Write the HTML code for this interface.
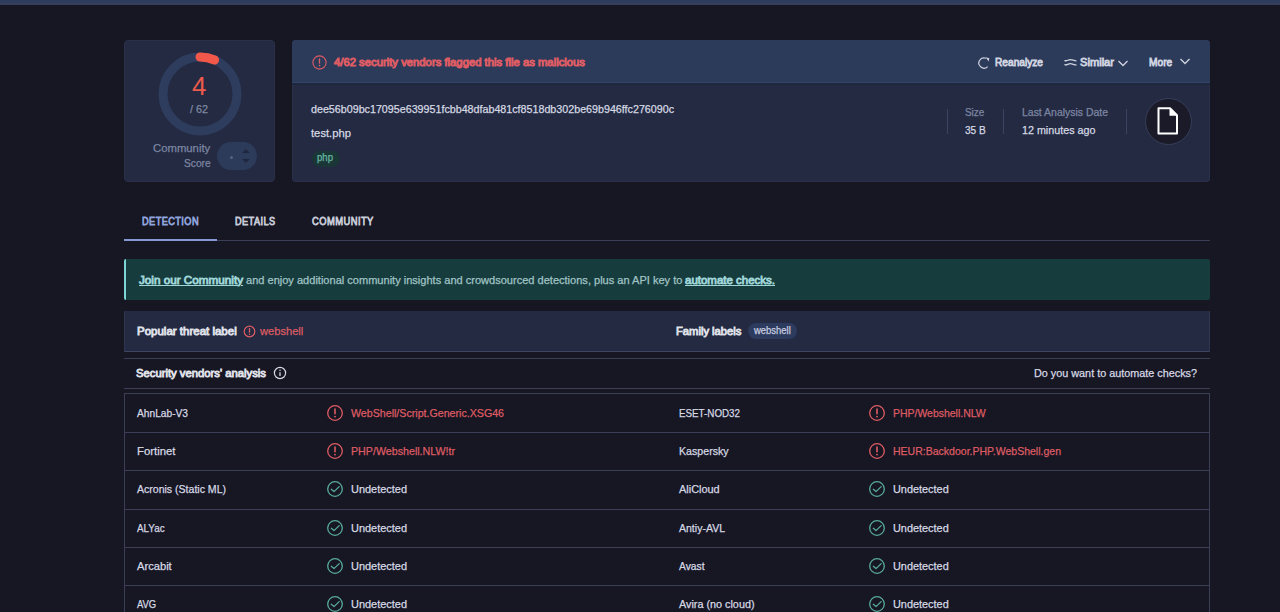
<!DOCTYPE html>
<html><head><meta charset="utf-8">
<style>
*{margin:0;padding:0;box-sizing:border-box}
html,body{width:1280px;height:612px;overflow:hidden;background:#171623;font-family:"Liberation Sans",sans-serif;color:#d6d9e3}
.a{position:absolute;white-space:nowrap}
.t{position:absolute;white-space:nowrap;transform-origin:0 0;line-height:1}
</style></head><body>
<div class="a" style="left:0;top:0;width:1280px;height:3px;background:#2e3d5e"></div>
<div class="a" style="left:0;top:3px;width:1280px;height:2px;background:#363e58"></div>
<div class="a" style="left:0;top:5px;width:1280px;height:1px;background:#131628"></div>
<div class="a" style="left:124px;top:40px;width:151px;height:142px;background:#232a42;border-radius:4px;border:1px solid #2a304a"></div>
<svg class="a" style="left:155px;top:49px" width="90" height="90" viewBox="0 0 90 90">
  <circle cx="45" cy="45" r="37" fill="none" stroke="#2e3d5e" stroke-width="9"/>
  <path d="M45 8 A37 37 0 0 1 59.6 11" fill="none" stroke="#f2584a" stroke-width="9" stroke-linecap="round"/>
</svg>
<div class="t" style="left:192.00px;top:72.79px;font-size:26px;color:#ee5a4b;transform:scaleX(0.9959);">4</div>
<div class="t" style="left:190.00px;top:103.99px;font-size:11px;color:#7f88a0;-webkit-text-stroke:0.25px #7f88a0;transform:scaleX(0.9811);">/ 62</div>
<div class="t" style="left:153.40px;top:143.49px;font-size:11px;color:#7d86a2;-webkit-text-stroke:0.25px #7d86a2;transform:scaleX(1.0284);">Community</div>
<div class="t" style="left:183.90px;top:157.59px;font-size:11px;color:#7d86a2;-webkit-text-stroke:0.25px #7d86a2;transform:scaleX(0.9292);">Score</div>
<div class="a" style="left:217px;top:142px;width:40px;height:28px;border-radius:14px;background:#2d3b5b"></div>
<div class="a" style="left:230px;top:155.5px;width:3px;height:3px;border-radius:2px;background:#56627e"></div>
<svg class="a" style="left:240px;top:146px" width="12" height="20" viewBox="0 0 12 20"><path d="M2 7 L6 3 L10 7Z M2 13 L6 17 L10 13Z" fill="#1f2740"/></svg>
<div class="a" style="left:292px;top:40px;width:918px;height:142px;background:#232a42;border-radius:4px;overflow:hidden;box-shadow:inset 0 0 0 1px #2a304a"><div class="a" style="left:0;top:0;width:918px;height:43px;background:#2d3b5b;border-bottom:1px solid #32436a"></div><div class="a" style="left:0;top:43px;width:918px;height:2px;background:#1f273e"></div></div>
<svg class="a" style="left:311px;top:54px" width="17" height="17" viewBox="0 0 17 17"><circle cx="8.5" cy="8.5" r="6.6" fill="none" stroke="#de5c64" stroke-width="1.1"/><path d="M8.5 4.9 V9.2" stroke="#de5c64" stroke-width="1.3" stroke-linecap="round"/><circle cx="8.5" cy="11.6" r="0.8" fill="#de5c64"/></svg>
<div class="t" style="left:334.00px;top:57.27px;font-size:11.5px;color:#de5c64;-webkit-text-stroke:1.03px #de5c64;transform:scaleX(0.9817);">4/62 security vendors flagged this file as malicious</div>
<div class="t" style="left:311.00px;top:104.29px;font-size:11px;color:#d6d9e3;-webkit-text-stroke:0.25px #d6d9e3;transform:scaleX(0.9734);">dee56b09bc17095e639951fcbb48dfab481cf8518db302be69b946ffc276090c</div>
<div class="t" style="left:311.00px;top:128.09px;font-size:11px;color:#d6d9e3;-webkit-text-stroke:0.25px #d6d9e3;transform:scaleX(1.0220);">test.php</div>
<div class="a" style="left:311.5px;top:150.5px;width:28px;height:16.5px;border-radius:8px;background:#1a3637"></div>
<div class="t" style="left:317.00px;top:153.03px;font-size:10px;color:#66b8a2;-webkit-text-stroke:0.25px #66b8a2;transform:scaleX(0.9591);">php</div>
<svg class="a" style="left:976.8px;top:55.5px" width="14" height="14" viewBox="0 0 14 14"><path d="M8.9 2.3 A5.1 5.1 0 1 0 10.6 10.6" fill="none" stroke="#d0d4e0" stroke-width="1.2"/><path d="M8.6 1.3 L12.4 2.2 L11.6 5.6 Z" fill="#d0d4e0"/></svg>
<div class="t" style="left:995.00px;top:57.44px;font-size:11px;color:#d0d4e0;-webkit-text-stroke:0.82px #d0d4e0;transform:scaleX(0.9235);">Reanalyze</div>
<svg class="a" style="left:1063px;top:57px" width="15" height="11" viewBox="0 0 15 11"><path d="M1.9 3.6 C3.5 4.4 5.2 2.6 7.1 2.6 C9.5 2.6 11 3.8 13 3.8 M1.9 7.7 C3.5 8.5 5.2 6.7 7.1 6.7 C9.5 6.7 11 7.9 13 7.9" fill="none" stroke="#d0d4e0" stroke-width="1.3" stroke-linecap="round"/></svg>
<div class="t" style="left:1079.60px;top:57.44px;font-size:11px;color:#d0d4e0;-webkit-text-stroke:0.82px #d0d4e0;transform:scaleX(1.0116);">Similar</div>
<svg class="a" style="left:1117px;top:59px" width="12" height="9" viewBox="0 0 12 9"><path d="M1.5 2 L6 6.5 L10.5 2" fill="none" stroke="#d0d4e0" stroke-width="1.3"/></svg>
<div class="t" style="left:1148.80px;top:57.44px;font-size:11px;color:#d0d4e0;-webkit-text-stroke:0.82px #d0d4e0;transform:scaleX(0.9258);">More</div>
<svg class="a" style="left:1179px;top:57px" width="12" height="9" viewBox="0 0 12 9"><path d="M1.5 2 L6 6.5 L10.5 2" fill="none" stroke="#d0d4e0" stroke-width="1.3"/></svg>
<div class="a" style="left:946.5px;top:109px;width:1px;height:25px;background:#3a4360"></div>
<div class="a" style="left:1003px;top:109px;width:1px;height:25px;background:#3a4360"></div>
<div class="a" style="left:1126px;top:109px;width:1px;height:25px;background:#3a4360"></div>
<div class="t" style="left:964.50px;top:107.11px;font-size:10.5px;color:#7d86a2;-webkit-text-stroke:0.25px #7d86a2;transform:scaleX(0.9449);">Size</div>
<div class="t" style="left:964.50px;top:124.69px;font-size:11px;color:#d6d9e3;-webkit-text-stroke:0.25px #d6d9e3;transform:scaleX(0.9192);">35 B</div>
<div class="t" style="left:1021.60px;top:107.11px;font-size:10.5px;color:#7d86a2;-webkit-text-stroke:0.25px #7d86a2;transform:scaleX(0.9957);">Last Analysis Date</div>
<div class="t" style="left:1021.60px;top:124.69px;font-size:11px;color:#d6d9e3;-webkit-text-stroke:0.25px #d6d9e3;transform:scaleX(0.9759);">12 minutes ago</div>
<div class="a" style="left:1144.5px;top:97.5px;width:47px;height:47px;border-radius:24px;background:#1a1a28;border:1px solid #363e5a"></div>
<svg class="a" style="left:1156px;top:106px" width="24" height="30" viewBox="0 0 24 30"><path d="M2.5 2.2 H14 L21 9.2 V27.6 H2.5 Z" fill="none" stroke="#ffffff" stroke-width="2" stroke-linejoin="round"/><path d="M13.5 2.2 L21 9.7 H13.5Z" fill="#ffffff"/></svg>
<div class="t" style="left:142.00px;top:215.61px;font-size:10.5px;color:#90a5de;-webkit-text-stroke:0.79px #90a5de;letter-spacing:0.5px;transform:scaleX(0.8747);">DETECTION</div>
<div class="t" style="left:235.30px;top:215.81px;font-size:10.5px;color:#c8ccd8;-webkit-text-stroke:0.79px #c8ccd8;letter-spacing:0.5px;transform:scaleX(0.8713);">DETAILS</div>
<div class="t" style="left:311.60px;top:215.81px;font-size:10.5px;color:#c8ccd8;-webkit-text-stroke:0.79px #c8ccd8;letter-spacing:0.5px;transform:scaleX(0.8925);">COMMUNITY</div>
<div class="a" style="left:124px;top:240px;width:1086px;height:1px;background:#3a3f57"></div>
<div class="a" style="left:124px;top:239px;width:93px;height:2px;background:#8299d6"></div>
<div class="a" style="left:124px;top:259px;width:1086px;height:41px;background:#173c3e;border-left:2.5px solid #7fd5d6;border-radius:2px"></div>
<div class="t" style="left:138.75px;top:274.69px;font-size:11px;color:#9fd6d8;-webkit-text-stroke:0.82px #9fd6d8;transform:scaleX(1.0633);text-decoration:underline;">Join our Community</div>
<div class="t" style="left:245.60px;top:274.69px;font-size:11px;color:#a0c4c5;-webkit-text-stroke:0.25px #a0c4c5;transform:scaleX(1.0038);">and enjoy additional community insights and crowdsourced detections, plus an API key to</div>
<div class="t" style="left:684.90px;top:274.69px;font-size:11px;color:#9fd6d8;-webkit-text-stroke:0.82px #9fd6d8;transform:scaleX(1.0440);text-decoration:underline;">automate checks.</div>
<div class="a" style="left:124px;top:310.5px;width:1086px;height:41.5px;background:#232a42;border:1px solid #2f3650;border-top-color:#232a42;border-bottom-color:#3c4562"></div>
<div class="t" style="left:137.00px;top:325.69px;font-size:11px;color:#e0e2ea;-webkit-text-stroke:0.82px #e0e2ea;transform:scaleX(1.0452);">Popular threat label</div>
<svg class="a" style="left:243px;top:324.5px" width="13" height="13" viewBox="0 0 13 13"><circle cx="6.5" cy="6.5" r="5.3" fill="none" stroke="#de5c64" stroke-width="1.2"/><path d="M6.5 3.6 V7.2" stroke="#de5c64" stroke-width="1.3" stroke-linecap="round"/><circle cx="6.5" cy="9.2" r="0.75" fill="#de5c64"/></svg>
<div class="t" style="left:260.40px;top:325.69px;font-size:11px;color:#de5c64;-webkit-text-stroke:0.25px #de5c64;transform:scaleX(1.0117);">webshell</div>
<div class="t" style="left:675.60px;top:325.69px;font-size:11px;color:#e0e2ea;-webkit-text-stroke:0.82px #e0e2ea;transform:scaleX(1.0190);">Family labels</div>
<div class="a" style="left:747.5px;top:322.5px;width:49.5px;height:16.5px;border-radius:8px;background:#2d3b5e"></div>
<div class="t" style="left:753.75px;top:325.84px;font-size:10px;color:#c8cde0;-webkit-text-stroke:0.25px #c8cde0;transform:scaleX(0.9458);">webshell</div>
<div class="a" style="left:124px;top:358px;width:1086px;height:1px;background:#3a3f57"></div>
<div class="t" style="left:136.00px;top:368.29px;font-size:11px;color:#e0e2ea;-webkit-text-stroke:0.82px #e0e2ea;transform:scaleX(1.0251);">Security vendors' analysis</div>
<svg class="a" style="left:273px;top:366px" width="14" height="14" viewBox="0 0 14 14"><circle cx="7" cy="7" r="5.6" fill="none" stroke="#d6d9e3" stroke-width="1.2"/><path d="M7 6.2 V10" stroke="#d6d9e3" stroke-width="1.3"/><circle cx="7" cy="4.3" r="0.75" fill="#d6d9e3"/></svg>
<div class="t" style="left:1034.30px;top:368.19px;font-size:11px;color:#d6d9e3;-webkit-text-stroke:0.25px #d6d9e3;transform:scaleX(0.9837);">Do you want to automate checks?</div>
<div class="a" style="left:124px;top:388px;width:1086px;height:1px;background:#3a3f57"></div>
<div class="a" style="left:124px;top:393px;width:1086px;height:230px;border:1px solid #3a3f57"></div>
<div class="t" style="left:136.80px;top:407.69px;font-size:11px;color:#d6d9e3;-webkit-text-stroke:0.25px #d6d9e3;transform:scaleX(0.9266);">AhnLab-V3</div>
<svg class="a" style="left:326px;top:403.5px" width="18" height="18" viewBox="0 0 18 18"><circle cx="9" cy="9" r="7.3" fill="none" stroke="#de5c64" stroke-width="1.3"/><path d="M9 5 V9.8" stroke="#de5c64" stroke-width="1.6" stroke-linecap="round"/><circle cx="9" cy="12.6" r="0.95" fill="#de5c64"/></svg>
<div class="t" style="left:351.30px;top:407.69px;font-size:11px;color:#de5c64;-webkit-text-stroke:0.25px #de5c64;transform:scaleX(0.9675);">WebShell/Script.Generic.XSG46</div>
<div class="t" style="left:678.90px;top:407.69px;font-size:11px;color:#d6d9e3;-webkit-text-stroke:0.25px #d6d9e3;transform:scaleX(0.8910);">ESET-NOD32</div>
<svg class="a" style="left:868px;top:403.5px" width="18" height="18" viewBox="0 0 18 18"><circle cx="9" cy="9" r="7.3" fill="none" stroke="#de5c64" stroke-width="1.3"/><path d="M9 5 V9.8" stroke="#de5c64" stroke-width="1.6" stroke-linecap="round"/><circle cx="9" cy="12.6" r="0.95" fill="#de5c64"/></svg>
<div class="t" style="left:893.40px;top:407.69px;font-size:11px;color:#de5c64;-webkit-text-stroke:0.25px #de5c64;transform:scaleX(0.9507);">PHP/Webshell.NLW</div>
<div class="a" style="left:124px;top:431.9px;width:1086px;height:1px;background:#3a3f57"></div>
<div class="t" style="left:136.80px;top:446.04px;font-size:11px;color:#d6d9e3;-webkit-text-stroke:0.25px #d6d9e3;transform:scaleX(1.0298);">Fortinet</div>
<svg class="a" style="left:326px;top:441.85px" width="18" height="18" viewBox="0 0 18 18"><circle cx="9" cy="9" r="7.3" fill="none" stroke="#de5c64" stroke-width="1.3"/><path d="M9 5 V9.8" stroke="#de5c64" stroke-width="1.6" stroke-linecap="round"/><circle cx="9" cy="12.6" r="0.95" fill="#de5c64"/></svg>
<div class="t" style="left:351.30px;top:446.04px;font-size:11px;color:#de5c64;-webkit-text-stroke:0.25px #de5c64;transform:scaleX(0.9704);">PHP/Webshell.NLW!tr</div>
<div class="t" style="left:678.90px;top:446.04px;font-size:11px;color:#d6d9e3;-webkit-text-stroke:0.25px #d6d9e3;transform:scaleX(0.9659);">Kaspersky</div>
<svg class="a" style="left:868px;top:441.85px" width="18" height="18" viewBox="0 0 18 18"><circle cx="9" cy="9" r="7.3" fill="none" stroke="#de5c64" stroke-width="1.3"/><path d="M9 5 V9.8" stroke="#de5c64" stroke-width="1.6" stroke-linecap="round"/><circle cx="9" cy="12.6" r="0.95" fill="#de5c64"/></svg>
<div class="t" style="left:893.40px;top:446.04px;font-size:11px;color:#de5c64;-webkit-text-stroke:0.25px #de5c64;transform:scaleX(0.9562);">HEUR:Backdoor.PHP.WebShell.gen</div>
<div class="a" style="left:124px;top:470.2px;width:1086px;height:1px;background:#3a3f57"></div>
<div class="t" style="left:136.80px;top:484.39px;font-size:11px;color:#d6d9e3;-webkit-text-stroke:0.25px #d6d9e3;transform:scaleX(0.9580);">Acronis (Static ML)</div>
<svg class="a" style="left:326px;top:480.2px" width="18" height="18" viewBox="0 0 18 18"><circle cx="9" cy="9" r="7.3" fill="none" stroke="#58ab9c" stroke-width="1.3"/><path d="M5.3 9.3 L8 11.6 L13.2 6.6" fill="none" stroke="#58ab9c" stroke-width="1.3" stroke-linecap="round" stroke-linejoin="round"/></svg>
<div class="t" style="left:351.30px;top:484.39px;font-size:11px;color:#d6d9e3;-webkit-text-stroke:0.25px #d6d9e3;transform:scaleX(0.9954);">Undetected</div>
<div class="t" style="left:678.90px;top:484.39px;font-size:11px;color:#d6d9e3;-webkit-text-stroke:0.25px #d6d9e3;transform:scaleX(0.9936);">AliCloud</div>
<svg class="a" style="left:868px;top:480.2px" width="18" height="18" viewBox="0 0 18 18"><circle cx="9" cy="9" r="7.3" fill="none" stroke="#58ab9c" stroke-width="1.3"/><path d="M5.3 9.3 L8 11.6 L13.2 6.6" fill="none" stroke="#58ab9c" stroke-width="1.3" stroke-linecap="round" stroke-linejoin="round"/></svg>
<div class="t" style="left:893.40px;top:484.39px;font-size:11px;color:#d6d9e3;-webkit-text-stroke:0.25px #d6d9e3;transform:scaleX(0.9901);">Undetected</div>
<div class="a" style="left:124px;top:508.6px;width:1086px;height:1px;background:#3a3f57"></div>
<div class="t" style="left:136.80px;top:522.74px;font-size:11px;color:#d6d9e3;-webkit-text-stroke:0.25px #d6d9e3;transform:scaleX(0.8967);">ALYac</div>
<svg class="a" style="left:326px;top:518.55px" width="18" height="18" viewBox="0 0 18 18"><circle cx="9" cy="9" r="7.3" fill="none" stroke="#58ab9c" stroke-width="1.3"/><path d="M5.3 9.3 L8 11.6 L13.2 6.6" fill="none" stroke="#58ab9c" stroke-width="1.3" stroke-linecap="round" stroke-linejoin="round"/></svg>
<div class="t" style="left:351.30px;top:522.74px;font-size:11px;color:#d6d9e3;-webkit-text-stroke:0.25px #d6d9e3;transform:scaleX(0.9954);">Undetected</div>
<div class="t" style="left:678.90px;top:522.74px;font-size:11px;color:#d6d9e3;-webkit-text-stroke:0.25px #d6d9e3;transform:scaleX(0.9565);">Antiy-AVL</div>
<svg class="a" style="left:868px;top:518.55px" width="18" height="18" viewBox="0 0 18 18"><circle cx="9" cy="9" r="7.3" fill="none" stroke="#58ab9c" stroke-width="1.3"/><path d="M5.3 9.3 L8 11.6 L13.2 6.6" fill="none" stroke="#58ab9c" stroke-width="1.3" stroke-linecap="round" stroke-linejoin="round"/></svg>
<div class="t" style="left:893.40px;top:522.74px;font-size:11px;color:#d6d9e3;-webkit-text-stroke:0.25px #d6d9e3;transform:scaleX(0.9901);">Undetected</div>
<div class="a" style="left:124px;top:546.9px;width:1086px;height:1px;background:#3a3f57"></div>
<div class="t" style="left:136.80px;top:561.09px;font-size:11px;color:#d6d9e3;-webkit-text-stroke:0.25px #d6d9e3;transform:scaleX(1.0136);">Arcabit</div>
<svg class="a" style="left:326px;top:556.9px" width="18" height="18" viewBox="0 0 18 18"><circle cx="9" cy="9" r="7.3" fill="none" stroke="#58ab9c" stroke-width="1.3"/><path d="M5.3 9.3 L8 11.6 L13.2 6.6" fill="none" stroke="#58ab9c" stroke-width="1.3" stroke-linecap="round" stroke-linejoin="round"/></svg>
<div class="t" style="left:351.30px;top:561.09px;font-size:11px;color:#d6d9e3;-webkit-text-stroke:0.25px #d6d9e3;transform:scaleX(0.9954);">Undetected</div>
<div class="t" style="left:678.90px;top:561.09px;font-size:11px;color:#d6d9e3;-webkit-text-stroke:0.25px #d6d9e3;transform:scaleX(0.9336);">Avast</div>
<svg class="a" style="left:868px;top:556.9px" width="18" height="18" viewBox="0 0 18 18"><circle cx="9" cy="9" r="7.3" fill="none" stroke="#58ab9c" stroke-width="1.3"/><path d="M5.3 9.3 L8 11.6 L13.2 6.6" fill="none" stroke="#58ab9c" stroke-width="1.3" stroke-linecap="round" stroke-linejoin="round"/></svg>
<div class="t" style="left:893.40px;top:561.09px;font-size:11px;color:#d6d9e3;-webkit-text-stroke:0.25px #d6d9e3;transform:scaleX(0.9901);">Undetected</div>
<div class="a" style="left:124px;top:585.2px;width:1086px;height:1px;background:#3a3f57"></div>
<div class="t" style="left:136.80px;top:599.44px;font-size:11px;color:#d6d9e3;-webkit-text-stroke:0.25px #d6d9e3;transform:scaleX(0.8565);">AVG</div>
<svg class="a" style="left:326px;top:595.25px" width="18" height="18" viewBox="0 0 18 18"><circle cx="9" cy="9" r="7.3" fill="none" stroke="#58ab9c" stroke-width="1.3"/><path d="M5.3 9.3 L8 11.6 L13.2 6.6" fill="none" stroke="#58ab9c" stroke-width="1.3" stroke-linecap="round" stroke-linejoin="round"/></svg>
<div class="t" style="left:351.30px;top:599.44px;font-size:11px;color:#d6d9e3;-webkit-text-stroke:0.25px #d6d9e3;transform:scaleX(0.9954);">Undetected</div>
<div class="t" style="left:678.90px;top:599.44px;font-size:11px;color:#d6d9e3;-webkit-text-stroke:0.25px #d6d9e3;transform:scaleX(0.9827);">Avira (no cloud)</div>
<svg class="a" style="left:868px;top:595.25px" width="18" height="18" viewBox="0 0 18 18"><circle cx="9" cy="9" r="7.3" fill="none" stroke="#58ab9c" stroke-width="1.3"/><path d="M5.3 9.3 L8 11.6 L13.2 6.6" fill="none" stroke="#58ab9c" stroke-width="1.3" stroke-linecap="round" stroke-linejoin="round"/></svg>
<div class="t" style="left:893.40px;top:599.44px;font-size:11px;color:#d6d9e3;-webkit-text-stroke:0.25px #d6d9e3;transform:scaleX(0.9901);">Undetected</div>
</body></html>
